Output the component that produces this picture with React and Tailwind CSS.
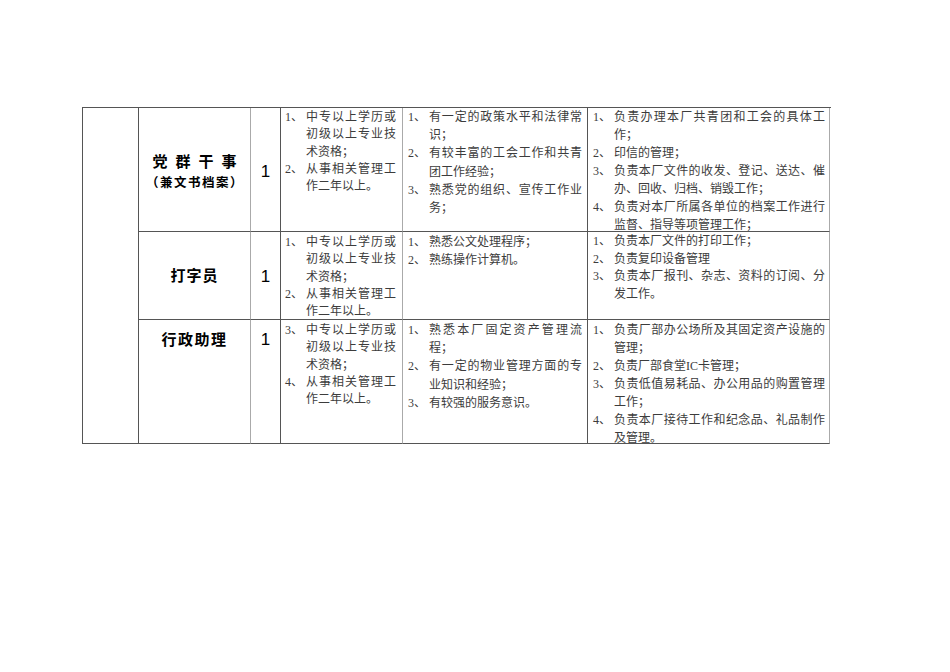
import React from "react";

const FONT = { fontFamily: '"Liberation Serif", "Noto Sans CJK SC", serif' };

function Item({ n, lines, lh }) {
  return (
    <div className="flex" style={{ lineHeight: lh }}>
      <div className="shrink-0 w-[21px] whitespace-nowrap">{n}、</div>
      <div className="flex-1 min-w-0">
        {lines.map((l, i) => (
          <div
            key={i}
            className={
              i < lines.length - 1
                ? "whitespace-nowrap text-justify [text-align-last:justify]"
                : "whitespace-nowrap"
            }
          >
            {l}
          </div>
        ))}
      </div>
    </div>
  );
}

function List({ items, lh, className }) {
  return (
    <div className={className}>
      {items.map((it, i) => (
        <Item key={i} n={it[0]} lines={it.slice(1)} lh={lh} />
      ))}
    </div>
  );
}

const rows = [
  {
    req: [
      ["1", "中专以上学历或", "初级以上专业技", "术资格；"],
      ["2", "从事相关管理工", "作二年以上。"],
    ],
    skill: [
      ["1", "有一定的政策水平和法律常", "识；"],
      ["2", "有较丰富的工会工作和共青", "团工作经验；"],
      ["3", "熟悉党的组织、宣传工作业", "务；"],
    ],
    duty: [
      ["1", "负责办理本厂共青团和工会的具体工", "作；"],
      ["2", "印信的管理；"],
      ["3", "负责本厂文件的收发、登记、送达、催", "办、回收、归档、销毁工作；"],
      ["4", "负责对本厂所属各单位的档案工作进行", "监督、指导等项管理工作；"],
    ],
  },
  {
    req: [
      ["1", "中专以上学历或", "初级以上专业技", "术资格；"],
      ["2", "从事相关管理工", "作二年以上。"],
    ],
    skill: [
      ["1", "熟悉公文处理程序；"],
      ["2", "熟练操作计算机。"],
    ],
    duty: [
      ["1", "负责本厂文件的打印工作；"],
      ["2", "负责复印设备管理"],
      ["3", "负责本厂报刊、杂志、资料的订阅、分", "发工作。"],
    ],
  },
  {
    req: [
      ["3", "中专以上学历或", "初级以上专业技", "术资格；"],
      ["4", "从事相关管理工", "作二年以上。"],
    ],
    skill: [
      ["1", "熟悉本厂固定资产管理流", "程；"],
      ["2", "有一定的物业管理方面的专", "业知识和经验；"],
      ["3", "有较强的服务意识。"],
    ],
    duty: [
      ["1", "负责厂部办公场所及其固定资产设施的", "管理；"],
      ["2", "负责厂部食堂IC卡管理；"],
      ["3", "负责低值易耗品、办公用品的购置管理", "工作；"],
      ["4", "负责本厂接待工作和纪念品、礼品制作", "及管理。"],
    ],
  },
];

export default function App() {
  const dark = "border-[#555]";
  const sans = { fontFamily: '"Liberation Sans", sans-serif' };
  return (
    <div className="w-[950px] h-[672px] bg-white pl-[82px] pt-[107px]" style={FONT}>
      <div
        className={`grid grid-cols-[56px_112px_30px_122px_185px_242px] grid-rows-[124px_88px_124px] w-[749px] border-t border-l ${dark} text-[12px] text-[#3c3c3c]`}
      >
        <div className={`row-span-3 border-r border-b ${dark}`} />

        {/* Row 1 */}
        <div className={`border-r border-b border-r-[#aaa] ${dark} flex flex-col items-center justify-center pt-[4px] text-black font-bold`}>
          <div className="text-[15px] leading-[22px] tracking-[8px] pl-[8px]">党群干事</div>
          <div className="text-[12.5px] leading-[20px] tracking-[1.5px] pl-[1px]">（兼文书档案）</div>
        </div>
        <div className={`border-r border-b ${dark} flex items-center justify-center pt-[4px] text-black text-[17px]`} style={sans}>
          1
        </div>
        <div className={`border-r border-b border-r-[#aaa] ${dark} pl-[4px] pr-[6px] pt-[1px]`}>
          <List items={rows[0].req} lh="17.3px" />
        </div>
        <div className={`border-r border-b ${dark} pl-[5px] pr-[5px]`}>
          <List items={rows[0].skill} lh="18.2px" />
        </div>
        <div className={`border-r border-b border-r-[#aaa] ${dark} pl-[5px] pr-[4px]`}>
          <List items={rows[0].duty} lh="18px" />
        </div>

        {/* Row 2 */}
        <div className={`border-r border-b border-r-[#aaa] ${dark} flex items-center justify-center pt-[2px] text-black font-bold text-[15px] tracking-[1px]`}>
          打字员
        </div>
        <div className={`border-r border-b ${dark} flex items-center justify-center pt-[2px] text-black text-[17px]`} style={sans}>
          1
        </div>
        <div className={`border-r border-b border-r-[#aaa] ${dark} pl-[4px] pr-[6px] pt-[2px]`}>
          <List items={rows[1].req} lh="17.3px" />
        </div>
        <div className={`border-r border-b ${dark} pl-[5px] pr-[5px] pt-[1px]`}>
          <List items={rows[1].skill} lh="18px" />
        </div>
        <div className={`border-r border-b border-r-[#aaa] ${dark} pl-[5px] pr-[4px] pt-[1px]`}>
          <List items={rows[1].duty} lh="17.7px" />
        </div>

        {/* Row 3 */}
        <div className={`border-r border-b border-r-[#aaa] ${dark} flex justify-center pt-[9px] text-black font-bold text-[15px] leading-[22px] tracking-[1.5px]`}>
          行政助理
        </div>
        <div className={`border-r border-b ${dark} flex justify-center pt-[9px] text-black text-[17px] leading-[22px]`} style={sans}>
          1
        </div>
        <div className={`border-r border-b border-r-[#aaa] ${dark} pl-[4px] pr-[6px] pt-[2px]`}>
          <List items={rows[2].req} lh="17.3px" />
        </div>
        <div className={`border-r border-b ${dark} pl-[5px] pr-[5px] pt-[1px]`}>
          <List items={rows[2].skill} lh="18.2px" />
        </div>
        <div className={`border-r border-b border-r-[#aaa] ${dark} pl-[5px] pr-[4px] pt-[1px]`}>
          <List items={rows[2].duty} lh="18px" />
        </div>
      </div>
    </div>
  );
}
